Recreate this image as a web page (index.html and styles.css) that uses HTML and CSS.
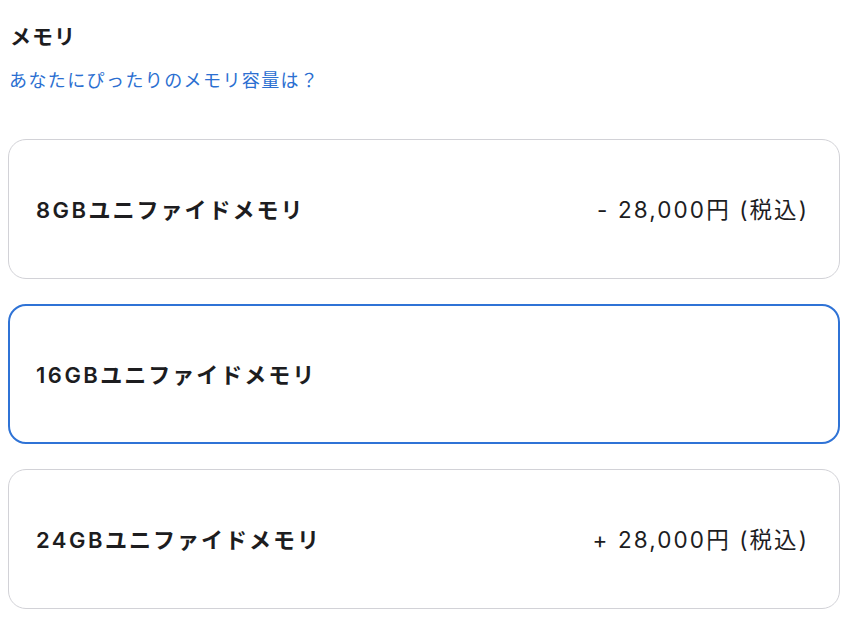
FILE: index.html
```html
<!DOCTYPE html>
<html lang="ja">
<head>
<meta charset="utf-8">
<link rel="stylesheet" href="styles.css">
</head>
<body>
<div class="page">
  <h2 class="title">メモリ</h2>
  <a class="help" href="#">あなたにぴったりのメモリ容量は？</a>
  <div class="options">
    <div class="card">
      <span class="name"><span class="cap">8GB</span>ユニファイドメモリ</span>
      <span class="price">- 28,000円 (税込)</span>
    </div>
    <div class="card selected">
      <span class="name"><span class="cap">16GB</span>ユニファイドメモリ</span>
    </div>
    <div class="card">
      <span class="name"><span class="cap">24GB</span>ユニファイドメモリ</span>
      <span class="price">+ 28,000円 (税込)</span>
    </div>
  </div>
</div>
</body>
</html>
```

FILE: styles.css
```css
html, body {
  margin: 0;
  padding: 0;
  background: #ffffff;
}
body {
  font-family: "Noto Sans CJK JP", "Noto Sans", sans-serif;
  color: #1d1d1f;
}
.page {
  padding: 20px 18px 0 8px;
  display: flex;
  flex-direction: column;
}
.title {
  margin: 0 0 0 2px;
  font-size: 21px;
  font-weight: 700;
  line-height: 30px;
  letter-spacing: 1px;
}
.help {
  margin: 17px 0 0 1px;
  font-size: 18px;
  line-height: 24px;
  color: #2b6fd1;
  text-decoration: none;
  letter-spacing: 1.4px;
}
.options {
  margin-top: 48px;
  display: flex;
  flex-direction: column;
  gap: 25px;
}
.card {
  box-sizing: border-box;
  height: 140px;
  border: 1px solid #d2d2d7;
  border-radius: 18px;
  display: flex;
  align-items: center;
  justify-content: space-between;
  padding: 0 30px 3px 27px;
}
.card.selected {
  border: 2px solid #2f73d6;
  padding-left: 26px;
}
.name {
  font-family: Inter, "Noto Sans CJK JP", sans-serif;
  font-size: 22px;
  font-weight: 600;
  letter-spacing: 2px;
}
.cap {
  letter-spacing: 2.5px;
}
.price {
  font-family: Inter, "Noto Sans CJK JP", sans-serif;
  font-size: 22.5px;
  font-weight: 400;
  letter-spacing: 2.1px;
}
```
